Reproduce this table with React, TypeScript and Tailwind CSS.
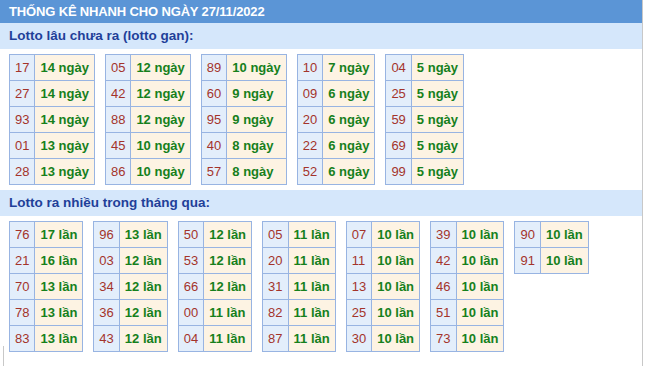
import React from "react";

type Row = [string, string];

const gan: Row[][] = [
  [["17", "14"], ["27", "14"], ["93", "14"], ["01", "13"], ["28", "13"]],
  [["05", "12"], ["42", "12"], ["88", "12"], ["45", "10"], ["86", "10"]],
  [["89", "10"], ["60", "9"], ["95", "9"], ["40", "8"], ["57", "8"]],
  [["10", "7"], ["09", "6"], ["20", "6"], ["22", "6"], ["52", "6"]],
  [["04", "5"], ["25", "5"], ["59", "5"], ["69", "5"], ["99", "5"]],
];

const nhieu: Row[][] = [
  [["76", "17"], ["21", "16"], ["70", "13"], ["78", "13"], ["83", "13"]],
  [["96", "13"], ["03", "12"], ["34", "12"], ["36", "12"], ["43", "12"]],
  [["50", "12"], ["53", "12"], ["66", "12"], ["00", "11"], ["04", "11"]],
  [["05", "11"], ["20", "11"], ["31", "11"], ["82", "11"], ["87", "11"]],
  [["07", "10"], ["11", "10"], ["13", "10"], ["25", "10"], ["30", "10"]],
  [["39", "10"], ["42", "10"], ["46", "10"], ["51", "10"], ["73", "10"]],
  [["90", "10"], ["91", "10"]],
];

function Table({ rows, unit }: { rows: Row[]; unit: string }) {
  return (
    <table className="border-collapse text-[13px] leading-[15px]">
      <tbody>
        {rows.map(([n, v], i) => (
          <tr key={i}>
            <td className="border border-[#98b4e2] bg-[#e3eefb] px-[5px] py-[5px] text-[#a3342b]">
              {n}
            </td>
            <td className="border border-[#98b4e2] bg-[#fdf3e3] px-[5px] py-[5px] font-bold text-[#16801c] whitespace-nowrap">
              {v} {unit}
            </td>
          </tr>
        ))}
      </tbody>
    </table>
  );
}

export default function App() {
  return (
    <div
      className="w-[643px] h-[366px] overflow-hidden bg-white border-r border-[#c8c8c8]"
      style={{ fontFamily: '"Liberation Sans", Arial, sans-serif' }}
    >
      <div className="h-[23px] bg-[#5b95d6] pl-[9px] flex items-center text-white font-bold text-[13px] tracking-[-0.15px]">
        THỐNG KÊ NHANH CHO NGÀY 27/11/2022
      </div>
      <div className="h-[26px] bg-[#d5e7fb] pl-[9px] flex items-center text-[#1f3f99] font-bold text-[13.5px]">
        Lotto lâu chưa ra (lotto gan):
      </div>
      <div className="flex items-start gap-[10px] pl-[9px] pt-[5px]">
        {gan.map((rows, i) => (
          <Table key={i} rows={rows} unit="ngày" />
        ))}
      </div>
      <div className="mt-[5px] h-[26px] bg-[#d5e7fb] pl-[9px] flex items-center text-[#1f3f99] font-bold text-[13.5px]">
        Lotto ra nhiều trong tháng qua:
      </div>
      <div className="flex items-start gap-[10px] pl-[9px] pt-[5px]">
        {nhieu.map((rows, i) => (
          <Table key={i} rows={rows} unit="lần" />
        ))}
      </div>
      <div className="-mt-[6px] ml-[3px] h-[30px] border-l border-[#c8c8c8]" />
    </div>
  );
}
